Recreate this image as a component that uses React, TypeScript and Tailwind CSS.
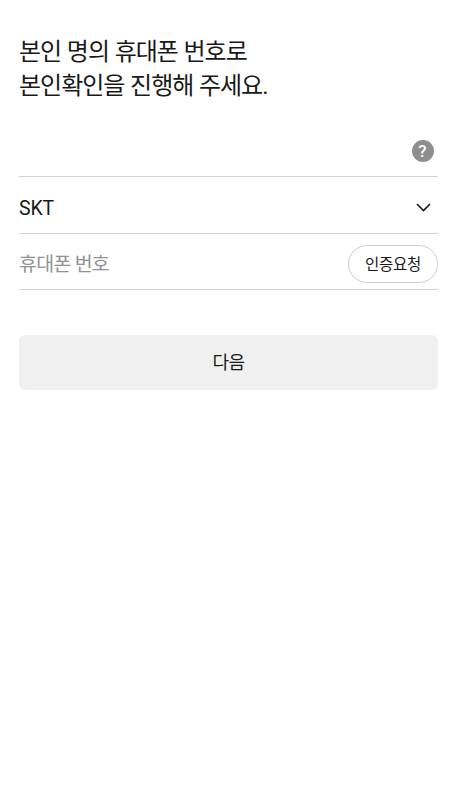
import React from "react";

export default function App() {
  return (
    <main className="h-[800px] w-full overflow-hidden bg-white px-[19px] pt-[36px] font-['Roboto','Noto_Sans_CJK_KR',sans-serif] text-[#191919]">
      <h1 className="text-[24px] leading-[33.5px] font-normal tracking-[-1px] [word-spacing:0.7px]">
        본인 명의 휴대폰 번호로
        <br />
        본인확인을 진행해 주세요.
      </h1>
      <form className="mt-[23px]" onSubmit={(e) => e.preventDefault()}>
        <div className="flex h-[51px] items-center justify-end border-b border-[#d3d3d3] pr-[4.5px]">
          <button type="button" aria-label="도움말" className="flex size-[22px] items-center justify-center rounded-full bg-[#8e8e8e] pt-px text-[17px] leading-none font-medium text-white">?</button>
        </div>
        <div className="flex h-[57px] items-center justify-between border-b border-[#d3d3d3] pr-[7px]">
          <span className="pt-[7px] text-[19.5px] tracking-[-0.2px]">SKT</span>
          <svg className="mt-[5px] h-[9px] w-[15px]" viewBox="0 0 15 9" fill="none" stroke="currentColor" strokeWidth="1.6"><path d="M1 1L7.5 7.5L14 1" /></svg>
        </div>
        <div className="flex h-[56px] items-center justify-between border-b border-[#d3d3d3] pt-[5px]">
          <span className="pt-px text-[19.5px] tracking-[-0.75px] text-[#929292]">휴대폰 번호</span>
          <button type="button" className="h-[38px] w-[90px] rounded-full border border-[#cccccc] pt-[3px] text-[15.5px] tracking-[-0.2px]">인증요청</button>
        </div>
        <button type="submit" className="mt-[45px] h-[55px] w-full rounded-[6px] bg-[#f0f0f0] pb-px text-[18px] tracking-[-0.5px]">다음</button>
      </form>
    </main>
  );
}
